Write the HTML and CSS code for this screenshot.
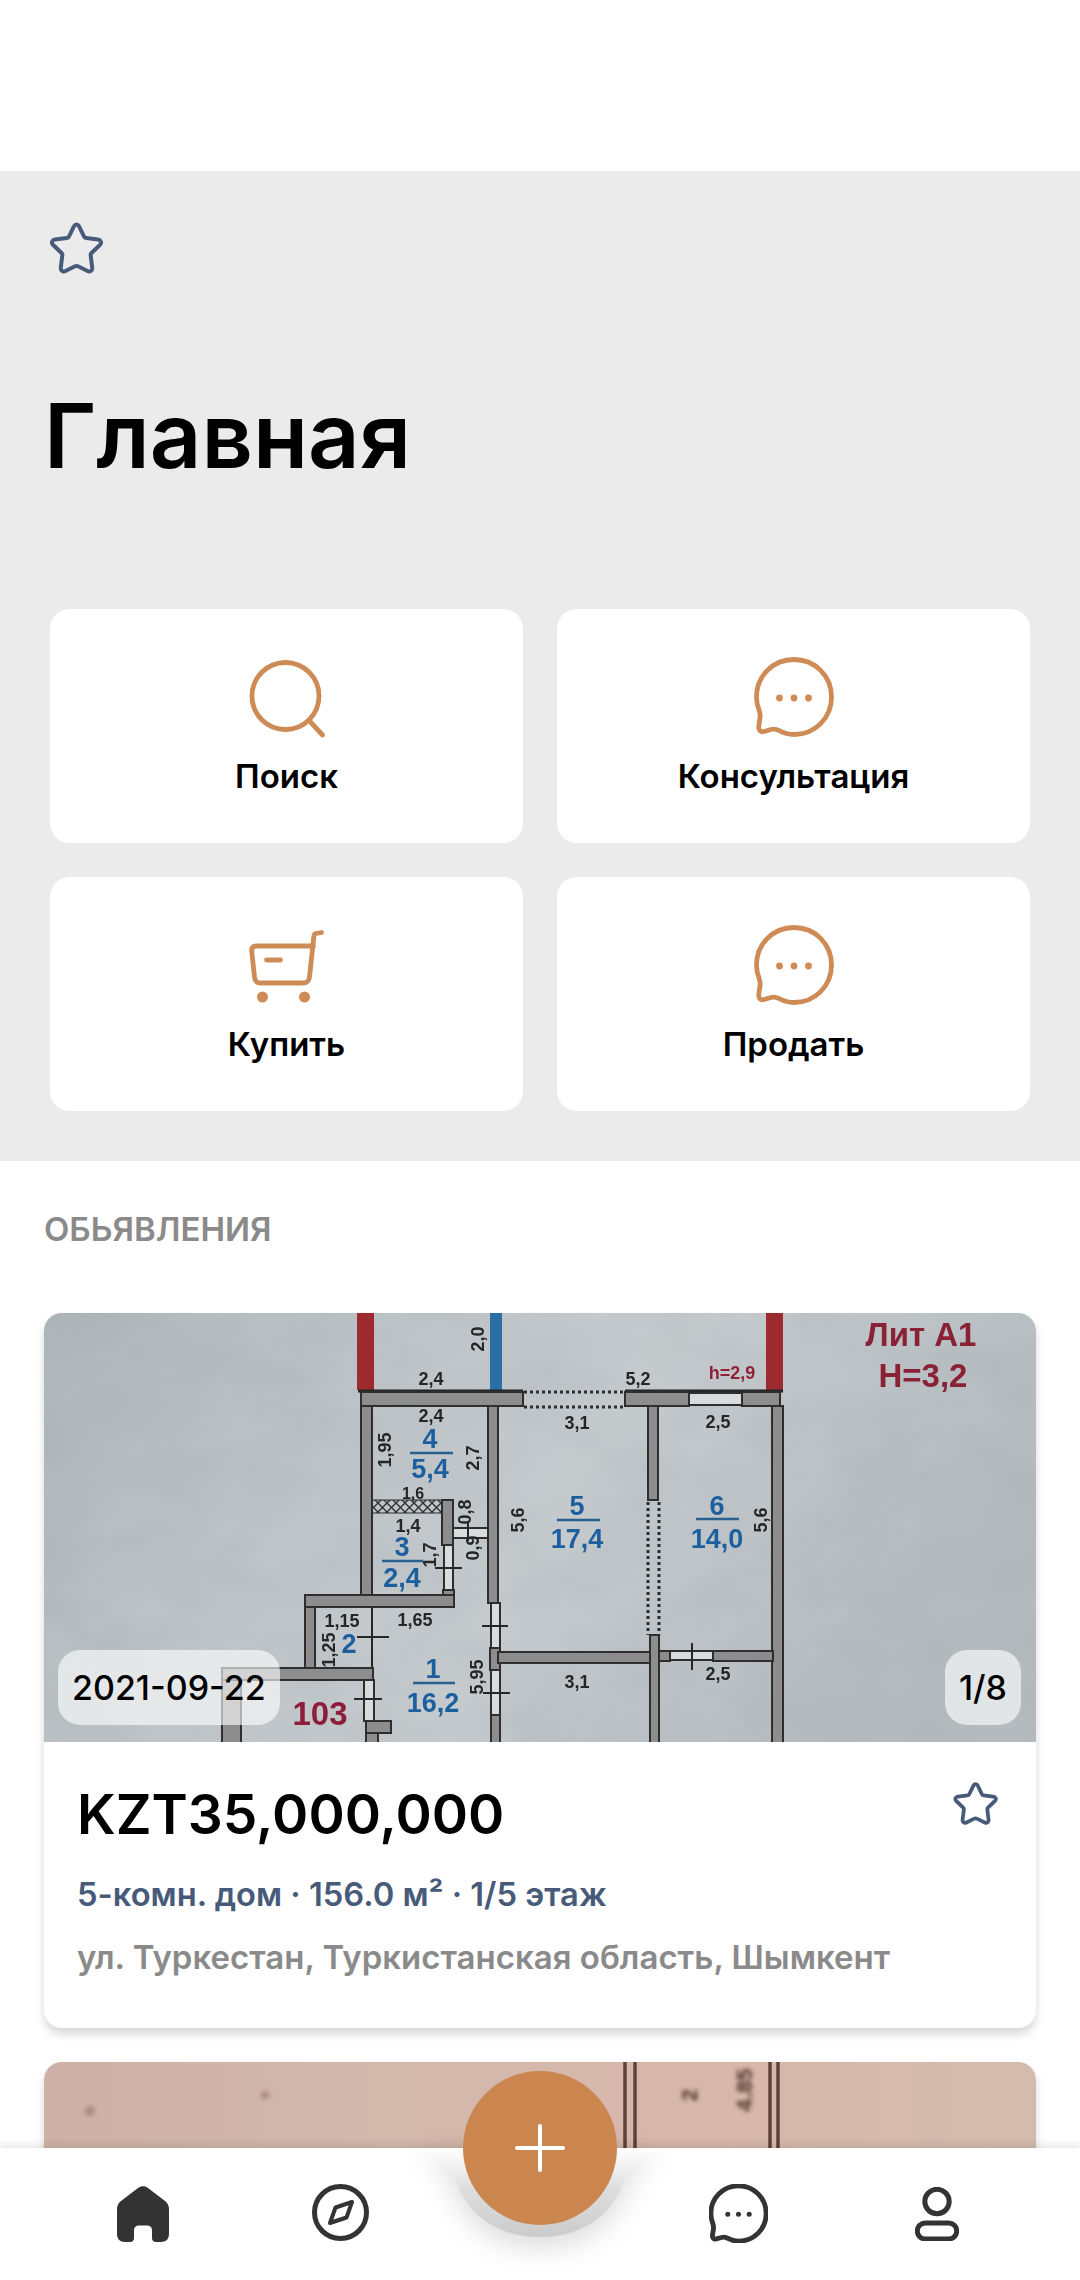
FILE: index.html
```html
<!DOCTYPE html>
<html lang="ru">
<head>
<meta charset="utf-8">
<title>Главная</title>
<link rel="stylesheet" href="styles.css">
</head>
<body>
<svg class="defs" width="0" height="0">
  <symbol id="star" viewBox="0 0 54 52">
    <path d="M24 4.2C25.2 2 27.8 2 29 4.2L34 14.5C34.4 15.4 35.2 16 36.2 16.1L48 17.6C51 18 52 20.8 50 22.8L41.5 31C40.8 31.7 40.5 32.6 40.7 33.5L42.2 45.5C42.7 48.6 40 50.2 37.5 49L28 44.3C27 43.8 26 43.8 25 44.3L15.5 49C13 50.2 10.3 48.6 10.8 45.5L12.3 33.5C12.5 32.6 12.2 31.7 11.5 31L3 22.8C1 20.8 2 18 5 17.6L16.8 16.1C17.8 16 18.6 15.4 19 14.5Z"/>
  </symbol>
  <symbol id="bubble" viewBox="0 0 80 80">
    <path d="M40 2.5C19 2.5 2.5 19 2.5 40C2.5 45 3.5 49 5 53C6 56 6.5 58 6 61L4.8 69C4.2 73 6.5 75.5 10 74.5L17 72.5C20 71.6 22 72 25 73.5C29.5 76 34.5 77.5 40 77.5C61 77.5 77.5 61 77.5 40C77.5 19 61 2.5 40 2.5Z"/>
    <circle class="dot" cx="25.5" cy="41" r="3.4"/>
    <circle class="dot" cx="40" cy="41" r="3.4"/>
    <circle class="dot" cx="54.5" cy="41" r="3.4"/>
  </symbol>
</svg>

<div class="status"></div>

<section class="hero">
  <svg class="star-big"><use href="#star"/></svg>
  <h1 class="title">Главная</h1>
  <div class="tiles">
    <a class="tile">
      <svg class="tile-icon" viewBox="0 0 80 80">
        <g transform="translate(2.5 3)">
          <circle cx="36" cy="36" r="33.5"/>
          <line x1="61" y1="62" x2="73" y2="75"/>
        </g>
      </svg>
      <span class="tile-label">Поиск</span>
    </a>
    <a class="tile">
      <svg class="tile-icon"><use href="#bubble"/></svg>
      <span class="tile-label">Консультация</span>
    </a>
    <a class="tile">
      <svg class="tile-icon" viewBox="0 0 80 80">
        <g transform="translate(2.5 5)">
          <path d="M72 2.5L66.5 3.5C65 3.8 64.5 4.5 64.4 6L60 47C59.7 50.5 57.5 53 54 53L11 53C7.5 53 5.5 50.5 5 47L2.2 21C1.9 18 3.5 16 6.5 16L64 16"/>
          <path d="M17 30H31"/>
          <circle class="dot" cx="13" cy="67" r="5.5"/>
          <circle class="dot" cx="55" cy="67" r="5.5"/>
        </g>
      </svg>
      <span class="tile-label">Купить</span>
    </a>
    <a class="tile">
      <svg class="tile-icon"><use href="#bubble"/></svg>
      <span class="tile-label">Продать</span>
    </a>
  </div>
</section>

<section class="listings">
  <h2 class="listings-head">ОБЬЯВЛЕНИЯ</h2>

  <article class="card">
    <div class="photo">
      <svg class="plan" viewBox="44 1313 992 429">
        <defs>
          <linearGradient id="paper" x1="0" x2="1" y1="0" y2="0.3">
            <stop offset="0" stop-color="#adb6b9"/>
            <stop offset="0.3" stop-color="#bcc3c6"/>
            <stop offset="0.6" stop-color="#c6cbce"/>
            <stop offset="1" stop-color="#b4bcbf"/>
          </linearGradient>
          <pattern id="hatch" width="9" height="9" patternUnits="userSpaceOnUse">
            <path d="M0 0L9 9M9 0L0 9" class="hatch-line"/>
          </pattern>
          <filter id="soft"><feGaussianBlur stdDeviation="0.6"/></filter>
          <filter id="grain">
            <feTurbulence type="fractalNoise" baseFrequency="0.012 0.02" numOctaves="3" seed="4"/>
            <feColorMatrix values="0 0 0 0 0.35  0 0 0 0 0.38  0 0 0 0 0.4  0 0 0 0.35 -0.1"/>
          </filter>
        </defs>
        <rect x="44" y="1313" width="992" height="429" fill="url(#paper)"/>
        <rect x="44" y="1313" width="992" height="429" filter="url(#grain)"/>

        <g filter="url(#soft)">
          <rect class="wall-red" x="357" y="1313" width="17" height="77"/>
          <rect class="wall-blue" x="490" y="1313" width="12" height="77"/>
          <rect class="wall-red" x="766" y="1313" width="17" height="77"/>
          <line class="ink" x1="358" y1="1391" x2="523" y2="1391"/>
          <line class="ink" x1="625" y1="1391" x2="783" y2="1391"/>

          <rect class="wall" x="361" y="1392" width="162" height="14"/>
          <rect class="wall" x="625" y="1392" width="64" height="14"/>
          <rect class="glass" x="689" y="1393" width="53" height="12"/>
          <rect class="wall" x="742" y="1392" width="38" height="14"/>
          <line class="dots" x1="524" y1="1392" x2="624" y2="1392"/>
          <line class="dots" x1="524" y1="1407" x2="624" y2="1407"/>

          <rect class="wall" x="361" y="1406" width="11" height="191"/>
          <rect class="wall" x="488" y="1406" width="10" height="197"/>
          <rect class="glass" x="491" y="1603" width="9" height="45"/>
          <rect class="wall" x="490" y="1648" width="10" height="22"/>
          <rect class="glass" x="491" y="1670" width="9" height="45"/>
          <rect class="wall" x="491" y="1715" width="9" height="30"/>

          <rect class="wall" x="648" y="1406" width="10" height="94"/>
          <line class="dots" x1="648" y1="1502" x2="648" y2="1635"/>
          <line class="dots" x1="659" y1="1502" x2="659" y2="1635"/>
          <rect class="wall" x="650" y="1635" width="9" height="110"/>
          <rect class="wall" x="772" y="1406" width="11" height="340"/>

          <rect class="wall" x="498" y="1652" width="152" height="11"/>
          <rect class="wall" x="659" y="1651" width="11" height="10"/>
          <rect class="glass" x="670" y="1651" width="43" height="9"/>
          <rect class="wall" x="713" y="1651" width="60" height="10"/>

          <rect class="hatched" x="372" y="1500" width="71" height="13"/>
          <rect class="wall" x="442" y="1500" width="11" height="45"/>
          <rect class="glass" x="444" y="1545" width="9" height="45"/>
          <rect class="wall" x="443" y="1590" width="11" height="17"/>
          <rect class="glass" x="453" y="1528" width="35" height="10"/>
          <rect class="wall" x="305" y="1595" width="149" height="12"/>
          <rect class="wall" x="305" y="1607" width="10" height="63"/>
          <line class="ink thin" x1="372" y1="1607" x2="372" y2="1668"/>
          <rect class="wall" x="222" y="1668" width="151" height="12"/>
          <rect class="wall" x="222" y="1680" width="19" height="66"/>
          <rect class="glass" x="364" y="1680" width="10" height="41"/>
          <rect class="wall" x="366" y="1721" width="25" height="12"/>
          <rect class="wall" x="366" y="1733" width="12" height="12"/>

          <line class="ink thin" x1="482" y1="1626" x2="508" y2="1626"/>
          <line class="ink thin" x1="483" y1="1693" x2="510" y2="1693"/>
          <line class="ink thin" x1="435" y1="1568" x2="462" y2="1568"/>
          <line class="ink thin" x1="357" y1="1637" x2="389" y2="1637"/>
          <line class="ink thin" x1="354" y1="1699" x2="382" y2="1699"/>
          <line class="ink thin" x1="692" y1="1643" x2="692" y2="1670"/>
          <line class="ink thin" x1="468" y1="1523" x2="468" y2="1541"/>

          <line class="frac" x1="410" y1="1453" x2="453" y2="1453"/>
          <line class="frac" x1="557" y1="1520" x2="600" y2="1520"/>
          <line class="frac" x1="696" y1="1519" x2="739" y2="1519"/>
          <line class="frac" x1="382" y1="1561" x2="423" y2="1561"/>
          <line class="frac" x1="413" y1="1683" x2="455" y2="1683"/>

          <text class="num" x="430" y="1448">4</text>
          <text class="num" x="430" y="1478">5,4</text>
          <text class="num" x="577" y="1515">5</text>
          <text class="num" x="577" y="1548">17,4</text>
          <text class="num" x="717" y="1515">6</text>
          <text class="num" x="717" y="1548">14,0</text>
          <text class="num" x="402" y="1556">3</text>
          <text class="num" x="402" y="1587">2,4</text>
          <text class="num" x="433" y="1678">1</text>
          <text class="num" x="433" y="1712">16,2</text>
          <text class="num" x="349" y="1653">2</text>

          <text class="dim" x="431" y="1385">2,4</text>
          <text class="dim" x="638" y="1385">5,2</text>
          <text class="dim" x="431" y="1422">2,4</text>
          <text class="dim" x="577" y="1429">3,1</text>
          <text class="dim" x="718" y="1428">2,5</text>
          <text class="dim tiny" x="413" y="1499">1,6</text>
          <text class="dim" x="408" y="1532">1,4</text>
          <text class="dim" x="415" y="1626">1,65</text>
          <text class="dim" x="342" y="1627">1,15</text>
          <text class="dim" x="577" y="1688">3,1</text>
          <text class="dim" x="718" y="1680">2,5</text>
          <text class="dim" transform="translate(484 1339) rotate(-90)">2,0</text>
          <text class="dim" transform="translate(391 1450) rotate(-90)">1,95</text>
          <text class="dim" transform="translate(479 1458) rotate(-90)">2,7</text>
          <text class="dim" transform="translate(471 1512) rotate(-90)">0,8</text>
          <text class="dim" transform="translate(524 1520) rotate(-90)">5,6</text>
          <text class="dim" transform="translate(767 1520) rotate(-90)">5,6</text>
          <text class="dim" transform="translate(479 1548) rotate(-90)">0,9</text>
          <text class="dim" transform="translate(436 1555) rotate(-90)">1,7</text>
          <text class="dim" transform="translate(335 1650) rotate(-90)">1,25</text>
          <text class="dim" transform="translate(483 1677) rotate(-90)">5,95</text>

          <text class="red-small" x="732" y="1379">h=2,9</text>
          <text class="red-big" x="921" y="1346">Лит А1</text>
          <text class="red-big" x="923" y="1387">Н=3,2</text>
          <text class="red-num" x="320" y="1725">103</text>
        </g>
      </svg>
      <span class="badge badge-date">2021-09-22</span>
      <span class="badge badge-count">1/8</span>
    </div>
    <div class="card-body">
      <div class="price-row">
        <div class="price">KZT35,000,000</div>
        <svg class="star-small"><use href="#star"/></svg>
      </div>
      <div class="specs">5-комн. дом · 156.0 м² · 1/5 этаж</div>
      <div class="address">ул. Туркестан, Туркистанская область, Шымкент</div>
    </div>
  </article>

  <article class="card">
    <div class="photo photo-pink">
      <svg class="plan" viewBox="44 2062 992 429">
        <defs>
          <filter id="smear"><feGaussianBlur stdDeviation="2"/></filter>
        </defs>
        <g class="plan-lines">
          <line x1="625" y1="2062" x2="625" y2="2160"/>
          <line x1="635" y1="2062" x2="635" y2="2160"/>
          <line x1="770" y1="2062" x2="770" y2="2160"/>
          <line x1="778" y1="2062" x2="778" y2="2160"/>
        </g>
        <g filter="url(#smear)">
          <text class="smudge" transform="translate(697 2095) rotate(-90)">2</text>
          <text class="smudge" transform="translate(752 2090) rotate(-90)">4.85</text>
          <circle class="spot" cx="90" cy="2111" r="5"/>
          <circle class="spot" cx="265" cy="2095" r="4"/>
        </g>
      </svg>
    </div>
  </article>
</section>

<nav class="tabbar">
  <svg class="notch" viewBox="0 0 254 100">
    <defs>
      <linearGradient id="notchFill" x1="0" x2="0" y1="0" y2="1">
        <stop offset="0" stop-color="#ffffff"/>
        <stop offset="0.25" stop-color="#eeeeee"/>
        <stop offset="0.45" stop-color="#dedede"/>
        <stop offset="1" stop-color="#cbcbcb"/>
      </linearGradient>
    </defs>
    <path d="M0 0C18 1 31 10 39 22C42 27 43 33 46 40C58 71 90 89 127 89C164 89 196 71 208 40C211 33 212 27 215 22C223 10 236 1 254 0Z"/>
  </svg>
  <a class="tab tab-home">
    <svg viewBox="0 0 52 56"><path d="M21 2C24-.5 28-.5 31 2L48 15C50.5 17 52 19.5 52 23L52 48C52 53 49 56 44 56L39 56C36.5 56 35 54.5 35 52L35 44C35 41 33 39.5 30 39.5L22 39.5C19 39.5 17 41 17 44L17 52C17 54.5 15.5 56 13 56L8 56C3 56 0 53 0 48L0 23C0 19.5 1.5 17 4 15Z"/></svg>
  </a>
  <a class="tab tab-compass">
    <svg viewBox="0 0 57 57">
      <circle cx="28.5" cy="28.5" r="26"/>
      <path d="M40 18L34.5 33.5L18 39L23.5 23.5Z"/>
    </svg>
  </a>
  <a class="tab tab-chat">
    <svg><use href="#bubble"/></svg>
  </a>
  <a class="tab tab-user">
    <svg viewBox="0 0 44 54">
      <circle cx="22" cy="14.5" r="12.2"/>
      <rect x="2.3" y="36" width="39.4" height="16" rx="8"/>
    </svg>
  </a>
</nav>
<button class="fab">
  <svg viewBox="0 0 50 48"><path d="M25 2V46M2 24H48"/></svg>
</button>
</body>
</html>
```
FILE: styles.css
```css
* {
    box-sizing: border-box;
}
html, body {
    margin: 0;
    padding: 0;
}
body {
    position: relative;
    width: 1080px;
    height: 2280px;
    overflow: hidden;
    background-color: #fff;
    font-family: Inter, "Noto Sans", sans-serif;
    color: #000;
}
.defs {
    position: absolute;
}
.dot {
    fill: currentColor;
    stroke: none;
}
.status {
    height: 171px;
}

/* top block */
.hero {
    background-color: #ebebeb;
    padding: 51px 50px 50px;
}
.star-big {
    display: block;
    width: 54px;
    height: 52px;
    fill: none;
    stroke: #475a7a;
    stroke-width: 4;
}
.title {
    margin: 107px 0 118px -6px;
    font-size: 90px;
    line-height: 110px;
    font-weight: 600;
}
.tiles {
    display: grid;
    grid-template-columns: 473px 473px;
    grid-auto-rows: 234px;
    gap: 34px;
}
.tile {
    display: flex;
    flex-direction: column;
    align-items: center;
    padding-top: 48px;
    background-color: #fff;
    border-radius: 20px;
}
.tile-icon {
    width: 80px;
    height: 80px;
    overflow: visible;
    fill: none;
    stroke: #cf8b55;
    stroke-width: 4.8;
    stroke-linecap: round;
    stroke-linejoin: round;
    color: #cf8b55;
}
.tile-label {
    margin-top: 19px;
    font-size: 33px;
    line-height: 40px;
    font-weight: 600;
}

/* listings */
.listings {
    height: 1120px;
    padding: 0 44px;
    overflow: hidden;
}
.listings-head {
    margin: 48px 0 64px;
    font-size: 33px;
    line-height: 40px;
    font-weight: 600;
    color: #8a8a8a;
}
.card {
    margin-bottom: 34px;
    background-color: #fff;
    border-radius: 18px;
    box-shadow: 0 6px 10px rgba(0, 0, 0, .16);
    overflow: hidden;
}
.photo {
    position: relative;
    height: 429px;
}
.photo-pink {
    background: linear-gradient(90deg, #cdb1a6, #d3b8ac 35%, #d8b7ab 65%, #d2bbad);
}
.plan {
    display: block;
    width: 992px;
    height: 429px;
}
.wall {
    fill: #8d8d8d;
    stroke: #2e2e2e;
    stroke-width: 2;
}
.wall-red {
    fill: #9c2a2d;
}
.wall-blue {
    fill: #2b6ea6;
}
.glass {
    fill: #d9dcdc;
    stroke: #2e2e2e;
    stroke-width: 2;
}
.hatched {
    fill: url(#hatch);
    stroke: #2e2e2e;
    stroke-width: 1;
}
.hatch-line {
    fill: none;
    stroke: #333;
    stroke-width: 1.4;
}
.ink {
    stroke: #262626;
    stroke-width: 3;
}
.thin {
    stroke-width: 2;
}
.dots {
    stroke: #2e2e2e;
    stroke-width: 3;
    stroke-dasharray: 3 3;
}
.frac {
    stroke: #2a5f8e;
    stroke-width: 2.5;
}
.num, .dim, .red-small, .red-big, .red-num {
    font-family: "Liberation Sans", sans-serif;
    font-weight: 700;
    text-anchor: middle;
}
.num {
    font-size: 27px;
    fill: #1f5f9f;
}
.dim {
    font-size: 18px;
    fill: #262626;
}
.tiny {
    font-size: 16px;
}
.red-small {
    font-size: 18px;
    fill: #8f2438;
}
.red-big {
    font-size: 33px;
    fill: #8a2035;
}
.red-num {
    font-size: 33px;
    fill: #8e1f3a;
}
.plan-lines line {
    stroke: #5f4238;
    stroke-width: 3.5;
}
.smudge {
    font-family: "Liberation Sans", sans-serif;
    font-weight: 700;
    font-size: 22px;
    text-anchor: middle;
    fill: #4d3228;
}
.spot {
    fill: #a58a80;
}
.badge {
    position: absolute;
    bottom: 17px;
    height: 75px;
    padding: 0 14px;
    background-color: rgba(255, 255, 255, .62);
    border-radius: 22px;
    font-size: 34px;
    line-height: 75px;
    font-weight: 500;
}
.badge-date {
    left: 14px;
}
.badge-count {
    right: 15px;
}
.card-body {
    height: 286px;
    padding: 40px 37px 0 33px;
}
.price-row {
    display: flex;
    justify-content: space-between;
    align-items: flex-start;
}
.price {
    font-size: 55px;
    line-height: 64px;
    font-weight: 600;
}
.star-small {
    width: 46px;
    height: 43px;
    fill: none;
    stroke: #475a7a;
    stroke-width: 4.5;
}
.specs {
    margin-top: 28px;
    font-size: 32.7px;
    line-height: 40px;
    font-weight: 600;
    color: #475a7a;
}
.address {
    margin-top: 23px;
    font-size: 33px;
    line-height: 40px;
    font-weight: 600;
    color: #8a8a8a;
}

/* bottom bar */
.tabbar {
    position: absolute;
    left: 0;
    right: 0;
    top: 2148px;
    height: 132px;
    background-color: #fff;
    box-shadow: 0 -3px 8px rgba(0, 0, 0, .1);
}
.notch {
    position: absolute;
    left: 413px;
    top: 0;
    width: 254px;
    height: 100px;
    overflow: visible;
    filter: drop-shadow(0 10px 14px rgba(0, 0, 0, .14));
}
.notch path {
    fill: url(#notchFill);
}
.tab {
    position: absolute;
    color: #333;
}
.tab svg {
    display: block;
    width: 100%;
    height: 100%;
    fill: none;
    stroke: #333;
    stroke-width: 5;
    stroke-linejoin: round;
}
.tab-home {
    left: 117px;
    top: 38px;
    width: 52px;
    height: 56px;
}
.tab-home svg {
    fill: #333;
    stroke: none;
}
.tab-compass {
    left: 312px;
    top: 36px;
    width: 57px;
    height: 57px;
}
.tab-compass path {
    stroke-width: 4;
}
.tab-chat {
    left: 709px;
    top: 36px;
    width: 59px;
    height: 59px;
}
.tab-chat svg {
    stroke-width: 6.6;
}
.tab-user {
    left: 915px;
    top: 39px;
    width: 44px;
    height: 54px;
}
.fab {
    position: absolute;
    left: 463px;
    top: 2071px;
    width: 154px;
    height: 154px;
    padding: 0;
    border: none;
    border-radius: 50%;
    background-color: #cb8650;
    display: flex;
    align-items: center;
    justify-content: center;
}
.fab svg {
    width: 50px;
    height: 48px;
    fill: none;
    stroke: #fff;
    stroke-width: 4;
    stroke-linecap: round;
}
```
